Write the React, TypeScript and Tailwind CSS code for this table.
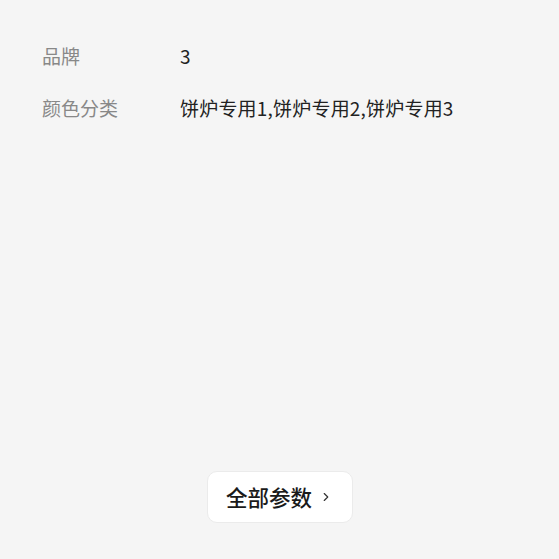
import { ChevronRight } from "lucide-react";

const rows = [
  { label: "品牌", value: "3" },
  { label: "颜色分类", value: "饼炉专用1,饼炉专用2,饼炉专用3" },
];

export default function App() {
  return (
    <div
      className="
        flex
        flex-col
        h-[559px]
        w-[559px]
        bg-[#f5f5f5]
        font-['Noto_Sans_CJK_SC',sans-serif]
      "
    >
      <div
        className="
          flex
          flex-col
          gap-[24px]
          pt-[42px]
          px-[42px]
        "
      >
        {rows.map((row) => (
          <div
            key={row.label}
            className="
              flex
              items-center
              h-[28px]
              text-[19px]
            "
          >
            <span
              className="
                w-[138px]
                shrink-0
                text-[#888888]
              "
            >
              {row.label}
            </span>
            <span className="text-[#222222] tracking-[0.2px]">{row.value}</span>
          </div>
        ))}
      </div>

      <div
        className="
          mt-auto
          pb-[36px]
          flex
          justify-center
        "
      >
        <button
          className="
            flex
            items-center
            justify-center
            gap-[7px]
            w-[146px]
            h-[52px]
            rounded-[10px]
            bg-white
            border
            border-[#ebebeb]
            text-[21.5px]
            font-medium
            text-[#1a1a1a]
          "
        >
          全部参数
          <ChevronRight size={14} strokeWidth={2} className="text-[#333333]" />
        </button>
      </div>
    </div>
  );
}
